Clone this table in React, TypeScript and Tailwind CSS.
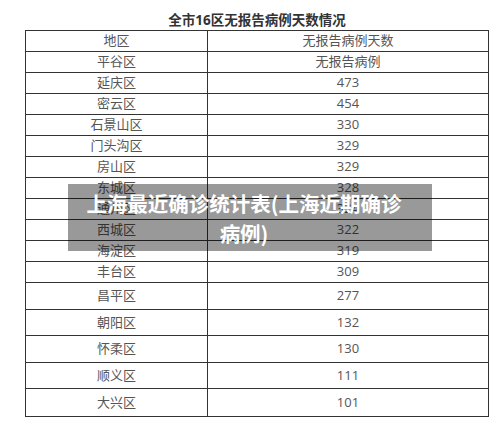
const rows: { name: string; value: string; tall?: boolean }[] = [
  { name: "平谷区", value: "无报告病例" },
  { name: "延庆区", value: "473" },
  { name: "密云区", value: "454" },
  { name: "石景山区", value: "330" },
  { name: "门头沟区", value: "329" },
  { name: "房山区", value: "329" },
  { name: "东城区", value: "328" },
  { name: "通州区", value: "324" },
  { name: "西城区", value: "322" },
  { name: "海淀区", value: "319" },
  { name: "丰台区", value: "309" },
  { name: "昌平区", value: "277", tall: true },
  { name: "朝阳区", value: "132", tall: true },
  { name: "怀柔区", value: "130", tall: true },
  { name: "顺义区", value: "111", tall: true },
  { name: "大兴区", value: "101", tall: true },
]

const font = { fontFamily: "'Open Sans', 'Noto Sans CJK SC', sans-serif" }

function Row({ name, value, tall, last }: { name: string; value: string; tall?: boolean; last?: boolean }) {
  return (
    <div
      className={
        "grid grid-cols-[182px_1fr] text-[13px] text-[#555] " +
        (tall ? "h-[26.5px] " : "h-[21px] ") +
        (last ? "" : "border-b border-[#333]")
      }
    >
      <div className="flex items-center justify-center border-r border-[#333]">{name}</div>
      <div className="flex items-center justify-center">{value}</div>
    </div>
  )
}

export default function App() {
  return (
    <div className="relative h-[435px] w-[500px] overflow-hidden bg-white" style={font}>
      <div className="ml-[25px] w-[464px]">
        <div className="flex h-[30px] items-center justify-center pt-[10px] text-[13.5px] font-bold text-[#333]">
          全市16区无报告病例天数情况
        </div>
        <div className="border border-[#333]">
          <Row name="地区" value="无报告病例天数" />
          {rows.map((r, i) => (
            <Row key={r.name} {...r} last={i === rows.length - 1} />
          ))}
        </div>
      </div>

      {/* title banner laid over the table */}
      <div className="absolute left-[68px] top-[184px] flex h-[67px] w-[364px] items-center justify-center bg-black/40">
        <p
          className="mr-[12px] w-[332px] text-center text-[20.5px] font-bold leading-[30px] text-white"
          style={{ fontFamily: "'Noto Sans CJK SC', sans-serif" }}
        >
          上海最近确诊统计表(上海近期确诊病例)
        </p>
      </div>
    </div>
  )
}
